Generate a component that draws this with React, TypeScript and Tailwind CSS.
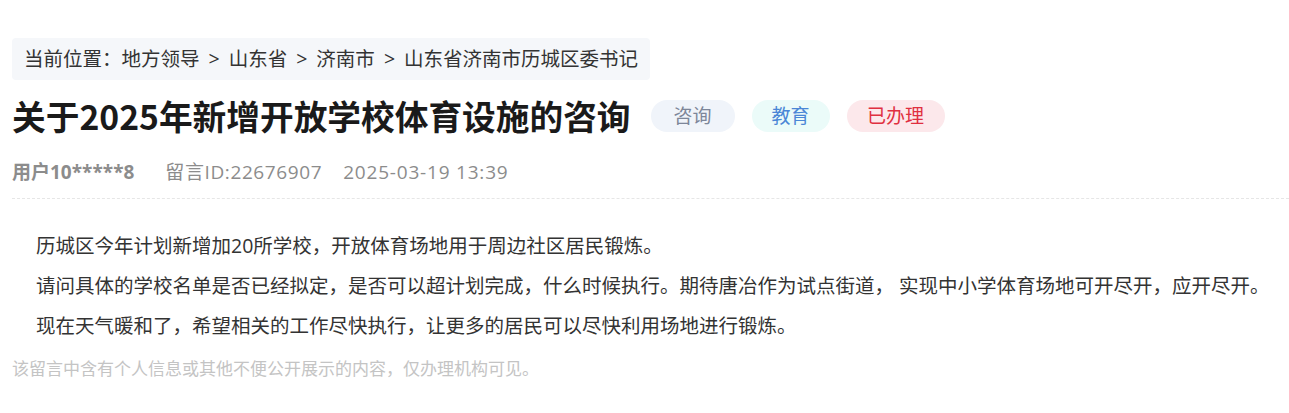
const font = { fontFamily: '"Open Sans", "Noto Sans CJK SC", sans-serif' };

const tags = [
  { label: "咨询", cls: "w-[84px] bg-[#f0f4fa] text-[#7d8699]" },
  { label: "教育", cls: "w-[78px] bg-[#ebfbf9] text-[#4a86d6]" },
  { label: "已办理", cls: "w-[98px] bg-[#fce8eb] text-[#e02f40]" },
];

const crumbs = ["地方领导", "山东省", "济南市", "山东省济南市历城区委书记"];

const paragraphs = [
  "历城区今年计划新增加20所学校，开放体育场地用于周边社区居民锻炼。",
  "请问具体的学校名单是否已经拟定，是否可以超计划完成，什么时候执行。期待唐冶作为试点街道， 实现中小学体育场地可开尽开，应开尽开。",
  "现在天气暖和了，希望相关的工作尽快执行，让更多的居民可以尽快利用场地进行锻炼。",
];

export default function App() {
  return (
    <div className="w-[1289px] h-[413px] bg-white pl-3 pt-[38px]" style={font}>
      <div className="inline-flex items-center h-[42px] px-3 bg-[#f5f7fa] rounded-sm text-[19.5px] text-[#333]">
        <span>当前位置：</span>
        {crumbs.map((c, i) => (
          <span key={c} className="flex items-center">
            {i > 0 && <span className="mx-[9px]">&gt;</span>}
            {c}
          </span>
        ))}
      </div>

      <div className="flex items-center mt-[20px] h-[32px]">
        <h1 className="text-[33.7px] font-bold text-[#1a1a1a] leading-none" style={{ fontFamily: '"Noto Sans CJK SC", sans-serif' }}>
          关于2025年新增开放学校体育设施的咨询
        </h1>
        <div className="flex items-center gap-[17px] ml-[20px]">
          {tags.map((t) => (
            <span key={t.label} className={`h-[32px] rounded-full flex items-center justify-center text-[19px] ${t.cls}`}>
              {t.label}
            </span>
          ))}
        </div>
      </div>

      <div className="flex items-center mt-[26px] h-[28px] text-[19px] text-[#8c8c8c]">
        <span className="font-bold">用户10*****8</span>
        <span className="ml-[31px] tracking-[0.6px]">留言ID:22676907</span>
        <span className="ml-[21px] tracking-[0.8px]">2025-03-19 13:39</span>
      </div>

      <div className="mt-[12px] border-t border-dashed border-[#e6e6e6]" />

      <div className="pl-6 pt-[27px] text-[19.5px] text-[#333] leading-[40px]">
        {paragraphs.map((p, i) => (
          <p key={i}>{p}</p>
        ))}
      </div>

      <p className="mt-[10px] text-[17px] text-[#c4c4c4]">该留言中含有个人信息或其他不便公开展示的内容，仅办理机构可见。</p>
    </div>
  );
}
